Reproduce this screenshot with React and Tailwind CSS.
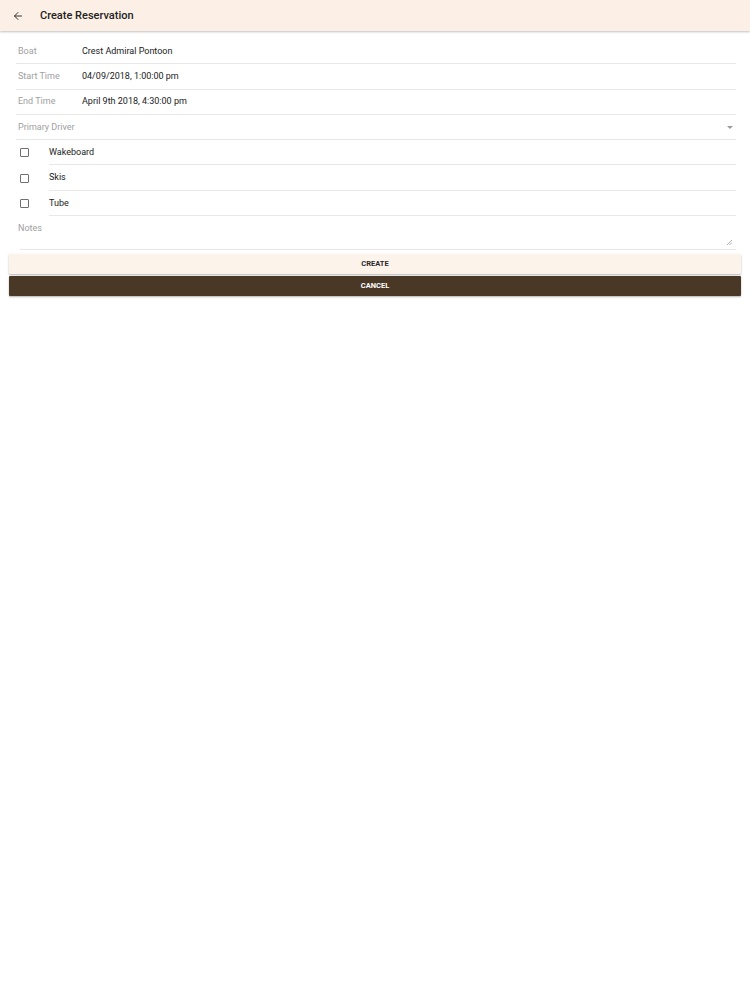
import React, { useState } from "react";
import { ArrowLeft } from "lucide-react";

const font = { fontFamily: "Roboto, 'Liberation Sans', sans-serif" };

function FieldRow({ label, value }) {
  return (
    <div className="flex items-center h-[25.3px] border-b border-[#e8e8e8] pt-[1px]">
      <div className="w-[66px] pl-[2px] text-[9px] text-[#a0a0a0]">{label}</div>
      <div className="text-[9px] text-[#212121]">{value}</div>
    </div>
  );
}

function CheckRow({ label, checked, onToggle }) {
  return (
    <div className="flex items-center h-[25.3px]">
      <div className="w-[33px] pl-[4px] flex items-center">
        <button
          onClick={onToggle}
          className="w-[9px] h-[9px] border-[1.3px] border-[#707070] rounded-[1px] bg-white"
          aria-label={label}
        />
      </div>
      <div className="flex-1 h-full flex items-center border-b border-[#e8e8e8] text-[9px] text-[#212121] pt-[1px]">
        {label}
      </div>
    </div>
  );
}

export default function App() {
  const [extras, setExtras] = useState({});
  const toggle = (k) => setExtras((p) => ({ ...p, [k]: !p[k] }));

  return (
    <div className="min-h-[1000px] bg-white" style={font}>
      {/* header */}
      <div className="h-[31px] bg-[#fcf0e6] flex items-center pt-[1px] shadow-[0_1px_2px_rgba(0,0,0,0.25)] relative">
        <div className="w-[40px] flex items-center pl-[12px]">
          <ArrowLeft size={12} strokeWidth={2} className="text-[#333]" />
        </div>
        <h1 className="text-[11px] font-medium text-[#222]">Create Reservation</h1>
      </div>

      {/* form */}
      <div className="pt-[8px] pl-[16px] pr-[14px]">
        <FieldRow label="Boat" value="Crest Admiral Pontoon" />
        <FieldRow label="Start Time" value="04/09/2018, 1:00:00 pm" />
        <FieldRow label="End Time" value="April 9th 2018, 4:30:00 pm" />
        <div className="flex items-center justify-between h-[25.3px] border-b border-[#e8e8e8] pt-[1px]">
          <div className="pl-[2px] text-[9px] text-[#a0a0a0]">Primary Driver</div>
          <svg width="6" height="3" viewBox="0 0 6 3" className="mr-[3px]">
            <path d="M0 0 L6 0 L3 3 Z" fill="#9a9a9a" />
          </svg>
        </div>
        <CheckRow label="Wakeboard" checked={extras.w} onToggle={() => toggle("w")} />
        <CheckRow label="Skis" checked={extras.s} onToggle={() => toggle("s")} />
        <CheckRow label="Tube" checked={extras.t} onToggle={() => toggle("t")} />
        <div className="ml-[4px] h-[34px] border-b border-[#e8e8e8] flex flex-col justify-between pt-[6px] pb-[4px]">
          <div className="text-[9px] text-[#a0a0a0] -ml-[2px]">Notes</div>
          <div className="flex justify-end pr-[4px]">
            <svg width="5" height="5" viewBox="0 0 5 5">
              <path d="M5 0 L0 5 M5 2.5 L2.5 5" stroke="#9a9a9a" strokeWidth="0.8" />
            </svg>
          </div>
        </div>
      </div>

      {/* actions */}
      <div className="px-[9px] pt-[4px] flex flex-col gap-[2px]">
        <button className="h-[20px] bg-[#fcf3ea] text-[7.5px] font-bold text-[#2a2a2a] shadow-[0_1px_2px_rgba(0,0,0,0.3)] rounded-[1px]">
          CREATE
        </button>
        <button className="h-[20px] bg-[#4a3826] text-[7.5px] font-bold text-white shadow-[0_1px_2px_rgba(0,0,0,0.3)] rounded-[1px]">
          CANCEL
        </button>
      </div>
    </div>
  );
}
